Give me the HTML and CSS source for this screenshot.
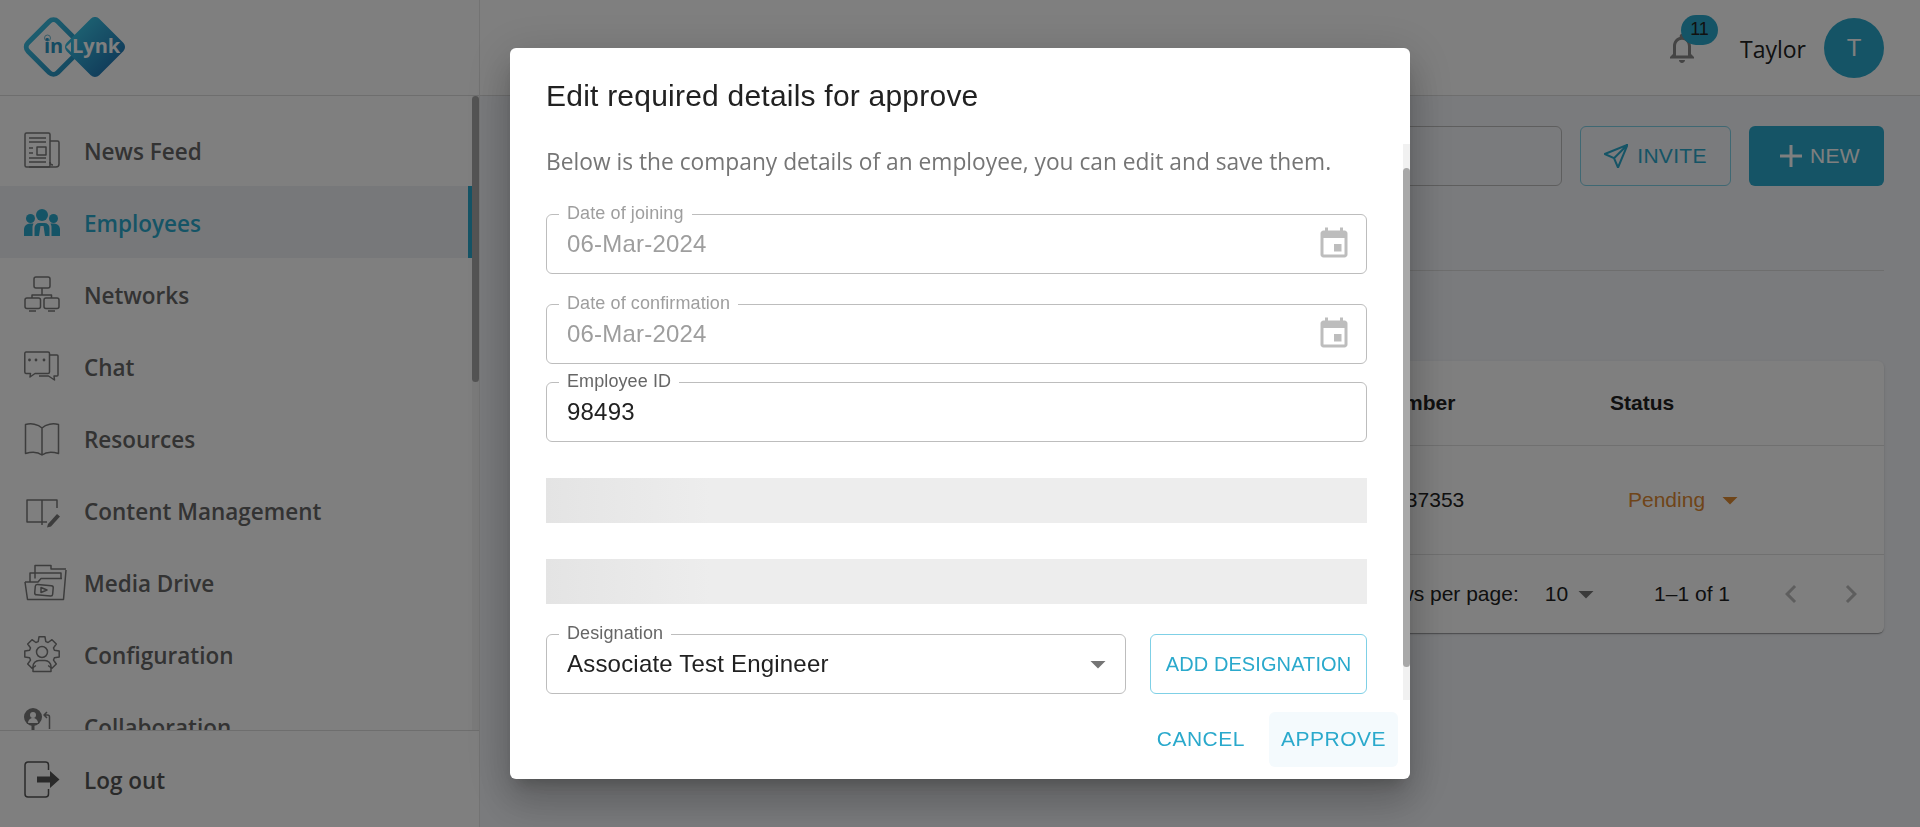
FILE: index.html
```html
<!DOCTYPE html>
<html lang="en">
<head>
  <meta charset="UTF-8">
  <meta name="viewport" content="width=device-width, initial-scale=1.0">
  <title>Employees</title>
  <link rel="stylesheet" href="styles.css">
</head>
<body>
  <aside class="sidebar">
    <div class="logo-bar">
      <svg class="logo" width="104" height="62" viewBox="0 0 104 62">
        <defs>
          <linearGradient id="logoLeft" x1="0" y1="0" x2="1" y2="0">
            <stop offset="0" stop-color="#38b8dc"/>
            <stop offset="1" stop-color="#2a96c4"/>
          </linearGradient>
          <linearGradient id="logoRight" x1="0" y1="0" x2="1" y2="0">
            <stop offset="0" stop-color="#38bce0"/>
            <stop offset="1" stop-color="#247eb8"/>
          </linearGradient>
        </defs>
        <rect x="9.500" y="9" width="42" height="42" rx="6" transform="rotate(45 30.500 30)" fill="#fff" stroke="url(#logoLeft)" stroke-width="5"/>
        <rect x="49" y="7" width="46" height="46" rx="6" transform="rotate(45 72 30)" fill="url(#logoRight)"/>
        <path d="M43 30l5-5v10z" fill="#fff"/>
        <circle cx="24.500" cy="21" r="3" fill="none" stroke="#6fb8d0" stroke-width="1"/>
        <text class="logo-in" x="21" y="36">in</text>
        <text class="logo-lynk" x="49" y="36">Lynk</text>
      </svg>
    </div>

    <div class="nav-scroll">
      <nav class="nav">
        <a class="nav-item">
          <svg class="icon" viewBox="0 0 36 36">
            <rect x="1" y="1" width="25" height="34" rx="1.500"/>
            <path d="M26 9h7.500a1.500 1.500 0 0 1 1.500 1.500V32a3 3 0 0 1-3 3H5M26 30a3 3 0 0 0 3 3M5 6h17M5 10h17M5 16h4M5 21h4M5 26h17M5 30h17"/>
            <rect x="13" y="15" width="9" height="8"/>
          </svg>
          <span class="nav-label">News Feed</span>
        </a>
        <a class="nav-item active">
          <svg class="icon icon-fill" viewBox="0 0 36 36">
            <circle cx="18" cy="11" r="6"/>
            <circle cx="6.500" cy="14.500" r="4.500"/>
            <circle cx="29.500" cy="14.500" r="4.500"/>
            <path d="M0 32v-7a6 6 0 0 1 6-5.500h3.500A9 9 0 0 0 8.500 24v8zM36 32v-7a6 6 0 0 0-6-5.500h-3.500a9 9 0 0 1 1 4.500v8zM10.500 32v-8a5 5 0 0 1 5-5h5a5 5 0 0 1 5 5v8h-4.500l-1.500-10h-3l-1.500 10z"/>
          </svg>
          <span class="nav-label">Employees</span>
        </a>
        <a class="nav-item">
          <svg class="icon" viewBox="0 0 36 36">
            <rect x="10" y="1" width="16" height="11" rx="2"/>
            <rect x="1" y="22" width="15.500" height="10.500" rx="2"/>
            <rect x="20" y="22" width="15" height="10.500" rx="2"/>
            <path d="M18 12v7M8 22v-3h19.500v3M5 35h7M24 35h7"/>
          </svg>
          <span class="nav-label">Networks</span>
        </a>
        <a class="nav-item">
          <svg class="icon" viewBox="0 0 36 36">
            <path d="M2 4h22a1.500 1.500 0 0 1 1.500 1.500V24a1.500 1.500 0 0 1-1.500 1.500H11L6 29l.500-3.500H2A1.500 1.500 0 0 1 .800 24V5.500A1.500 1.500 0 0 1 2 4z"/>
            <path d="M25.500 7h7.500a1 1 0 0 1 1 1v19a1 1 0 0 1-1 1h-3l.500 4-6-4H15"/>
            <circle class="dot" cx="5.500" cy="12" r="1.400"/>
            <circle class="dot" cx="12" cy="12" r="1.400"/>
            <circle class="dot" cx="20" cy="12" r="1.400"/>
          </svg>
          <span class="nav-label">Chat</span>
        </a>
        <a class="nav-item">
          <svg class="icon" viewBox="0 0 36 36">
            <path d="M18 8C14 4 7 3 1.500 4.500V33.500C7 32 14 32 18 35C22 32 29 32 34.500 33.500V4.500C29 3 22 4 18 8ZM18 8V35"/>
          </svg>
          <span class="nav-label">Resources</span>
        </a>
        <a class="nav-item">
          <svg class="icon" viewBox="0 0 36 36">
            <path d="M18 8H3v22h15M18 8v25M18 8h15v8M18 30h5"/>
            <path class="solid" d="M24 32l9-10 3 2.500-9 10-4 1z"/>
          </svg>
          <span class="nav-label">Content Management</span>
        </a>
        <a class="nav-item">
          <svg class="icon" viewBox="0 0 36 36">
            <path d="M1 18L3.500 35.500H39.500L42 6"/>
            <path d="M1 18H14L17 14.500H38M11 14.500V1.500H27V5H42M6 18V9H37V14.500"/>
            <rect x="11" y="21" width="18" height="10.500" rx="2" transform="rotate(5 20 26)"/>
            <path d="M17 23.500l6 2.500-6 2.500z"/>
          </svg>
          <span class="nav-label">Media Drive</span>
        </a>
        <a class="nav-item">
          <svg class="icon" viewBox="0 0 36 36">
            <path d="M11.900 29.500L8 32.300L3.700 28L6.500 24.100L5.600 21.800L.800 21V15L5.600 14.200L6.500 11.900L3.700 8L8 3.700L11.900 6.500L14.200 5.600L15 .800H21L21.800 5.600L24.100 6.500L28 3.700L32.300 8L29.500 11.900L30.400 14.200L35.200 15V21L30.400 21.800L29.500 24.100L32.300 28L28 32.300L24.100 29.500"/>
            <circle cx="18" cy="16" r="5.500"/>
            <path d="M9 35.500v-5a6 6 0 0 1 6-6h6a6 6 0 0 1 6 6v5z"/>
          </svg>
          <span class="nav-label">Configuration</span>
        </a>
        <a class="nav-item">
          <svg class="icon" viewBox="0 0 36 36">
            <circle class="solid" cx="9" cy="9" r="9"/>
            <circle class="cut" cx="9" cy="7" r="3"/>
            <path class="cut" d="M4 15a5 5 0 0 1 10 0z"/>
            <path class="solid" d="M7.500 16h3v10h-3zM1 24h16v4H1z"/>
            <path d="M23 4l-3 3 3 3M20 7h3.500a2 2 0 0 1 2 2v12"/>
            <path class="solid" d="M17 30a8 8 0 0 1 16 0z"/>
          </svg>
          <span class="nav-label">Collaboration</span>
        </a>
      </nav>
      <div class="scroll-track"><div class="scroll-thumb"></div></div>
    </div>

    <div class="logout">
      <a class="nav-item logout-item">
        <svg class="icon icon-dark" viewBox="0 0 36 36">
          <path d="M24.500 9V4a3 3 0 0 0-3-3H4a3 3 0 0 0-3 3v29a3 3 0 0 0 3 3h17.500a3 3 0 0 0 3-3v-5"/>
          <path class="solid" d="M13 15.500h13V10l9.500 8.500L26 27v-5.500H13z"/>
        </svg>
        <span class="nav-label">Log out</span>
      </a>
    </div>
  </aside>

  <div class="main">
    <header class="topbar">
      <div class="bell">
        <svg width="36" height="36" viewBox="0 0 24 24"><path d="M12 22c1.100 0 2-.9 2-2h-4c0 1.100.89 2 2 2zm6-6v-5c0-3.070-1.640-5.640-4.500-6.320V4c0-.83-.67-1.500-1.500-1.500s-1.500.67-1.500 1.500v.68C7.630 5.360 6 7.920 6 11v5l-2 2v1h16v-1l-2-2zm-2 1H8v-6c0-2.480 1.510-4.500 4-4.500s4 2.020 4 4.500v6z"/></svg>
        <span class="badge">11</span>
      </div>
      <span class="user-name">Taylor</span>
      <span class="avatar">T</span>
    </header>

    <section class="content">
      <div class="toolbar">
        <div class="search"></div>
        <button class="btn btn-outline">
          <svg width="24" height="24" viewBox="0 0 24 24"><path d="M23.500.8L.8 10l9.200 4.200L14 23.500zM23.500.8L10 14.200"/></svg>
          INVITE
        </button>
        <button class="btn btn-solid">
          <svg width="22" height="22" viewBox="0 0 22 22"><path d="M11 0v22M0 11h22"/></svg>
          NEW
        </button>
      </div>
      <div class="divider"></div>

      <div class="card">
        <div class="row row-head">
          <span class="cell-number">Phone Number</span>
          <span class="cell-status">Status</span>
        </div>
        <div class="row row-body">
          <span class="cell-number">+91 9876537353</span>
          <span class="cell-status status-pending">Pending
            <svg width="36" height="36" viewBox="0 0 24 24"><path d="M7 10l5 5 5-5z"/></svg>
          </span>
        </div>
        <div class="pager">
          <span>Rows per page:</span>
          <span class="pager-size">10
            <svg width="36" height="36" viewBox="0 0 24 24"><path d="M7 10l5 5 5-5z"/></svg>
          </span>
          <span class="pager-range">1–1 of 1</span>
          <svg class="chevron" width="36" height="36" viewBox="0 0 24 24"><path d="M15.410 7.410L14 6l-6 6 6 6 1.410-1.410L10.830 12z"/></svg>
          <svg class="chevron" width="36" height="36" viewBox="0 0 24 24"><path d="M10 6L8.590 7.410 13.170 12l-4.580 4.590L10 18l6-6z"/></svg>
        </div>
      </div>
    </section>
  </div>

  <div class="backdrop">
    <div class="dialog">
      <h2 class="dialog-title">Edit required details for approve</h2>
      <div class="dialog-body">
        <p class="dialog-text">Below is the company details of an employee, you can edit and save them.</p>

        <fieldset class="field disabled">
          <legend>Date of joining</legend>
          <div class="field-row">
            <span>06-Mar-2024</span>
            <svg class="field-icon" width="36" height="36" viewBox="0 0 24 24"><path d="M17 12h-5v5h5v-5zM16 1v2H8V1H6v2H5c-1.110 0-1.990.9-1.990 2L3 19c0 1.100.89 2 2 2h14c1.100 0 2-.9 2-2V5c0-1.100-.9-2-2-2h-1V1h-2zm3 18H5V8h14v11z"/></svg>
          </div>
        </fieldset>

        <fieldset class="field disabled">
          <legend>Date of confirmation</legend>
          <div class="field-row">
            <span>06-Mar-2024</span>
            <svg class="field-icon" width="36" height="36" viewBox="0 0 24 24"><path d="M17 12h-5v5h5v-5zM16 1v2H8V1H6v2H5c-1.110 0-1.990.9-1.990 2L3 19c0 1.100.89 2 2 2h14c1.100 0 2-.9 2-2V5c0-1.100-.9-2-2-2h-1V1h-2zm3 18H5V8h14v11z"/></svg>
          </div>
        </fieldset>

        <fieldset class="field field-tight">
          <legend>Employee ID</legend>
          <div class="field-row">
            <span>98493</span>
          </div>
        </fieldset>

        <div class="skeleton"></div>
        <div class="skeleton"></div>

        <div class="designation">
          <fieldset class="field field-grow">
            <legend>Designation</legend>
            <div class="field-row">
              <span>Associate Test Engineer</span>
              <svg class="field-icon field-arrow" width="36" height="36" viewBox="0 0 24 24"><path d="M7 10l5 5 5-5z"/></svg>
            </div>
          </fieldset>
          <button class="btn-add">ADD DESIGNATION</button>
        </div>

        <div class="dialog-track"><div class="dialog-thumb"></div></div>
      </div>
      <div class="dialog-actions">
        <button class="btn-text">CANCEL</button>
        <button class="btn-text btn-focus">APPROVE</button>
      </div>
    </div>
  </div>
</body>
</html>
```

FILE: styles.css
```css
* {
  box-sizing: border-box;
}
html, body {
  height: 100%;
}
body {
  margin: 0;
  display: flex;
  overflow: hidden;
  font-family: "Liberation Sans", Arial, sans-serif;
  background-color: #f4f6fa;
  color: #212121;
}

/* sidebar */
.sidebar {
  width: 480px;
  height: 100%;
  flex: none;
  display: flex;
  flex-direction: column;
  background-color: #fff;
  border-right: 1px solid #e6e6e6;
}
.logo-bar {
  height: 96px;
  flex: none;
  padding: 17px 0 0 23px;
  border-bottom: 1px solid #dcdcdc;
}
.logo {
  display: block;
}
.logo-in {
  font: bold 20px "Open Sans", sans-serif;
  fill: #2a96c4;
}
.logo-lynk {
  font: bold 20px "Open Sans", sans-serif;
  fill: #fff;
}
.nav-scroll {
  position: relative;
  flex: 1;
  min-height: 0;
  overflow: hidden;
  padding-top: 18px;
  background-color: #fff;
}
.nav-item {
  height: 72px;
  display: flex;
  align-items: center;
  gap: 24px;
  padding-left: 24px;
  margin-right: 7px;
  font: 600 22.500px "Open Sans", sans-serif;
  color: #666;
}
.nav-label {
  padding-top: 3px;
}
.nav-item.active {
  background-color: #eff1f5;
  border-right: 4px solid #2aa9cc;
  color: #2aa9cc;
}
.icon {
  width: 36px;
  height: 36px;
  flex: none;
  overflow: visible;
  fill: none;
  stroke: #7a7a7a;
  stroke-width: 1.500;
  stroke-linejoin: round;
}
.icon .dot, .icon .solid {
  fill: #7a7a7a;
  stroke: none;
}
.icon .cut {
  fill: #fff;
  stroke: none;
}
.icon-fill {
  fill: #2aa9cc;
  stroke: none;
}
.icon-dark {
  stroke: #555;
}
.icon-dark .solid {
  fill: #555;
}
.scroll-track {
  position: absolute;
  top: 0;
  right: 0;
  bottom: 0;
  width: 7px;
  background-color: #f4f4f4;
}
.scroll-thumb {
  height: 286px;
  border-radius: 4px;
  background-color: #a8a8a8;
}
.logout {
  height: 97px;
  flex: none;
  padding-top: 12px;
  border-top: 1px solid #dcdcdc;
}
.logout-item {
  margin-right: 0;
  color: #555;
}

/* main area */
.main {
  flex: 1;
  min-width: 0;
}
.topbar {
  height: 96px;
  display: flex;
  align-items: center;
  justify-content: flex-end;
  padding-right: 36px;
  background-color: #fff;
  border-bottom: 1px solid #dcdcdc;
}
.bell {
  position: relative;
  width: 36px;
  height: 36px;
  margin-right: 40px;
}
.bell svg {
  display: block;
  fill: #888;
}
.badge {
  position: absolute;
  top: -15px;
  left: 17px;
  width: 37px;
  height: 30px;
  display: flex;
  align-items: center;
  justify-content: center;
  border-radius: 15px;
  background-color: #2aa9cc;
  font-size: 18px;
  color: #222;
}
.user-name {
  padding-top: 3px;
  font: 500 23px "Open Sans", sans-serif;
  color: #222;
  margin-right: 18px;
}
.avatar {
  width: 60px;
  height: 60px;
  display: flex;
  align-items: center;
  justify-content: center;
  border-radius: 50%;
  background-color: #2aa9cc;
  font-size: 24px;
  color: #fff;
}
.content {
  padding: 30px 36px 0 40px;
}
.toolbar {
  display: flex;
  gap: 18px;
}
.search {
  flex: 1;
  height: 60px;
  border: 1px solid #bdbdbd;
  border-radius: 6px;
}
.btn {
  height: 60px;
  display: flex;
  align-items: center;
  justify-content: center;
  border-radius: 6px;
  font: 21px "Liberation Sans", Arial, sans-serif;
  letter-spacing: .3px;
}
.btn-outline {
  width: 151px;
  gap: 9px;
  background: none;
  border: 1px solid #7fd0e6;
  color: #2aa9cc;
}
.btn-outline svg {
  fill: none;
  stroke: #2aa9cc;
  stroke-width: 2;
  stroke-linejoin: round;
}
.btn-solid {
  width: 135px;
  gap: 8px;
  padding-left: 13px;
  background-color: #2aa9cc;
  border: none;
  color: #fff;
}
.btn-solid svg {
  stroke: #fff;
  stroke-width: 3;
}
.divider {
  height: 1px;
  margin-top: 84px;
  background-color: #dcdcdc;
}
.card {
  margin-top: 90px;
  border-radius: 6px;
  background-color: #fff;
  box-shadow: 0 2px 1px -1px rgba(0,0,0,.2), 0 1px 1px rgba(0,0,0,.14), 0 1px 3px rgba(0,0,0,.12);
}
.row {
  display: flex;
  align-items: center;
  border-bottom: 1px solid #e0e0e0;
  font-size: 21px;
}
.row-head {
  height: 85px;
  font-weight: bold;
}
.row-body {
  height: 109px;
}
.cell-number {
  margin-left: 786px;
  width: 304px;
}
.status-pending {
  display: flex;
  align-items: center;
  margin-left: 18px;
  color: #df8a33;
}
.status-pending svg {
  margin-left: 7px;
  fill: #df8a33;
}
.pager {
  height: 78px;
  display: flex;
  align-items: center;
  justify-content: flex-end;
  padding-right: 15px;
  font-size: 21px;
}
.pager-size {
  display: flex;
  align-items: center;
  margin-left: 26px;
}
.pager-size svg {
  fill: #757575;
}
.pager-range {
  margin: 0 19px 0 50px;
}
.chevron {
  fill: #bdbdbd;
  margin-left: 24px;
}

/* dialog */
.backdrop {
  position: fixed;
  inset: 0;
  display: flex;
  align-items: center;
  justify-content: center;
  background-color: rgba(0,0,0,.5);
}
.dialog {
  width: 900px;
  height: calc(100% - 96px);
  display: flex;
  flex-direction: column;
  border-radius: 6px;
  background-color: #fff;
  box-shadow: 0 11px 15px -7px rgba(0,0,0,.2), 0 24px 38px 3px rgba(0,0,0,.14), 0 9px 46px 8px rgba(0,0,0,.12);
}
.dialog-title {
  margin: 0;
  padding: 24px 36px;
  font-size: 30px;
  font-weight: 400;
  line-height: 48px;
  letter-spacing: .22px;
  color: #212121;
}
.dialog-body {
  position: relative;
  flex: 1;
  min-height: 0;
  overflow: hidden;
  padding: 0 43px 0 36px;
}
.dialog-text {
  margin: 0 0 24px;
  font: 22.750px/36px "Open Sans", sans-serif;
  color: #757575;
}
.field {
  margin: 20px 0 0;
  padding: 0 14px 10px 20px;
  min-width: 0;
  border: 1px solid #bdbdbd;
  border-radius: 6px;
}
.field legend {
  padding: 0 8px 3px;
  margin-left: -8px;
  font-size: 18px;
  line-height: 18px;
  letter-spacing: .1px;
  color: #666;
}
.field-tight {
  margin-top: 8px;
}
.field-row {
  height: 38px;
  display: flex;
  align-items: center;
  justify-content: space-between;
  font-size: 24px;
  letter-spacing: .2px;
}
.disabled legend, .disabled .field-row {
  color: #9e9e9e;
}
.field-icon {
  flex: none;
  fill: #bdbdbd;
}
.field-arrow {
  margin-right: -5px;
  fill: #757575;
}
.skeleton {
  height: 45px;
  margin-top: 36px;
  background: linear-gradient(90deg, #e4e4e4, #ededed 20%);
}
.designation {
  display: flex;
  align-items: flex-end;
  gap: 24px;
  margin-top: 20px;
}
.field-grow {
  flex: 1;
  margin: 0;
}
.btn-add {
  width: 217px;
  height: 60px;
  border: 1px solid #7fd0e6;
  border-radius: 6px;
  background: none;
  font: 20px "Liberation Sans", Arial, sans-serif;
  letter-spacing: .1px;
  color: #2aa9cc;
}
.dialog-track {
  position: absolute;
  top: 0;
  right: 0;
  bottom: 0;
  width: 7px;
  padding-top: 24px;
  background-color: #f1f1f1;
}
.dialog-thumb {
  height: 499px;
  border-radius: 4px;
  background-color: #a8a8a8;
}
.dialog-actions {
  height: 79px;
  flex: none;
  display: flex;
  align-items: center;
  justify-content: flex-end;
  gap: 12px;
  padding: 0 12px;
}
.btn-text {
  height: 55px;
  padding: 0 12px 2px;
  border: none;
  border-radius: 6px;
  background: none;
  font: 21px "Liberation Sans", Arial, sans-serif;
  letter-spacing: .5px;
  color: #2aa9cc;
}
.btn-focus {
  background-color: #f4fafd;
}
```
